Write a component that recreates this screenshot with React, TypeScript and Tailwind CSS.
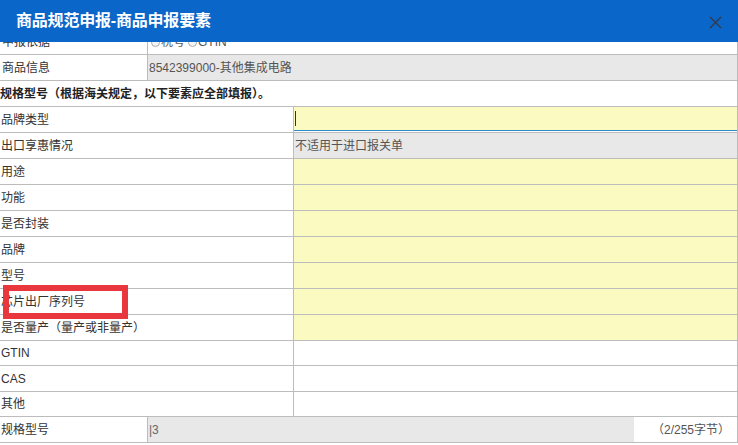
import React from 'react';

type Row = {
  label: string;
  kind: 'input' | 'focus' | 'readonly' | 'plain';
  value?: string;
  h: string;
};

const rows: Row[] = [
  { label: '品牌类型', kind: 'focus', h: 'h-[26px]' },
  { label: '出口享惠情况', kind: 'readonly', value: '不适用于进口报关单', h: 'h-[26px]' },
  { label: '用途', kind: 'input', h: 'h-[26px]' },
  { label: '功能', kind: 'input', h: 'h-[26px]' },
  { label: '是否封装', kind: 'input', h: 'h-[26px]' },
  { label: '品牌', kind: 'input', h: 'h-[26px]' },
  { label: '型号', kind: 'input', h: 'h-[26px]' },
  { label: '芯片出厂序列号', kind: 'input', h: 'h-[26px]' },
  { label: '是否量产（量产或非量产）', kind: 'input', h: 'h-[26px]' },
  { label: 'GTIN', kind: 'plain', h: 'h-[25px]' },
  { label: 'CAS', kind: 'plain', h: 'h-[26px]' },
  { label: '其他', kind: 'plain', h: 'h-[25px]' },
];

function Radio({ text }: { text: string }) {
  return (
    <span className="flex items-center gap-[1px] mr-[3px]">
      <span className="w-[9px] h-[9px] rounded-full border border-[#aaa] bg-[#f4f4f4]" />
      <span>{text}</span>
    </span>
  );
}

export default function App() {
  return (
    <div
      className="relative w-[738px] h-[445px] overflow-hidden bg-white text-[12px] text-[#333]"
      style={{ fontFamily: '"Liberation Sans", "Noto Sans CJK SC", sans-serif' }}
    >
      {/* title bar */}
      <div className="relative z-10 h-[42px] bg-[#0a66c8] flex items-center justify-between pl-[16px] pr-[16px]">
        <span className="text-white font-bold text-[16px] tracking-[-0.2px]">商品规范申报-商品申报要素</span>
        <svg width="13" height="13" viewBox="0 0 13 13" className="mt-[2px]">
          <path d="M1 1 L12 12 M12 1 L1 12" stroke="#2f3b4a" strokeWidth="1.4" />
        </svg>
      </div>

      {/* scrolled body */}
      <div className="h-[403px] overflow-hidden">
        <div className="mt-[-12px] w-[738px] border-r border-[#bcbcbc]">
          <div className="flex h-[25px] border-b border-[#bcbcbc]">
            <div className="w-[148px] border-r border-[#bcbcbc] pl-[2px] flex items-center">申报依据</div>
            <div className="flex-1 flex items-center pl-[3px] text-[#555]">
              <Radio text="税号" />
              <Radio text="GTIN" />
            </div>
          </div>

          <div className="flex h-[26px] border-b border-[#bcbcbc]">
            <div className="w-[148px] border-r border-[#bcbcbc] pl-[2px] flex items-center">商品信息</div>
            <div className="flex-1 bg-[#e8e8e8] flex items-center pl-[1px] text-[#555]">8542399000-其他集成电路</div>
          </div>

          <div className="flex h-[26px] border-b border-[#bcbcbc] items-center font-bold text-[#222]">
            规格型号（根据海关规定，以下要素应全部填报）。
          </div>

          {rows.map((r) => (
            <div key={r.label} className={`flex ${r.h} border-b border-[#bcbcbc]`}>
              <div className="w-[294px] border-r border-[#bcbcbc] pl-[1px] flex items-center">{r.label}</div>
              {r.kind === 'focus' && (
                <div className="flex-1 flex flex-col">
                  <div className="h-[24px] bg-[#fbfbc1] border-b border-[#2b8ac6] flex items-center">
                    <span className="ml-[1px] w-[1px] h-[15px] bg-[#333]" />
                  </div>
                  <div className="flex-1 bg-white" />
                </div>
              )}
              {r.kind === 'input' && <div className="flex-1 bg-[#fbfbc1]" />}
              {r.kind === 'readonly' && (
                <div className="flex-1 bg-[#e8e8e8] flex items-center pl-[1px] text-[#555]">{r.value}</div>
              )}
              {r.kind === 'plain' && <div className="flex-1 bg-white" />}
            </div>
          ))}

          <div className="flex h-[26px] border-b border-[#bcbcbc]">
            <div className="w-[148px] border-r border-[#bcbcbc] pl-[1px] flex items-center">规格型号</div>
            <div className="w-[486px] bg-[#e8e8e8] flex items-center pl-[1px] text-[#666]">|3</div>
            <div className="flex-1 flex items-center justify-end pr-[7px] text-[#555]">（2/255字节）</div>
          </div>
        </div>
      </div>

      {/* annotation box */}
      <div className="absolute left-[3px] top-[285px] w-[125px] h-[34px] border-[6px] border-[#e8383d]" />
    </div>
  );
}
